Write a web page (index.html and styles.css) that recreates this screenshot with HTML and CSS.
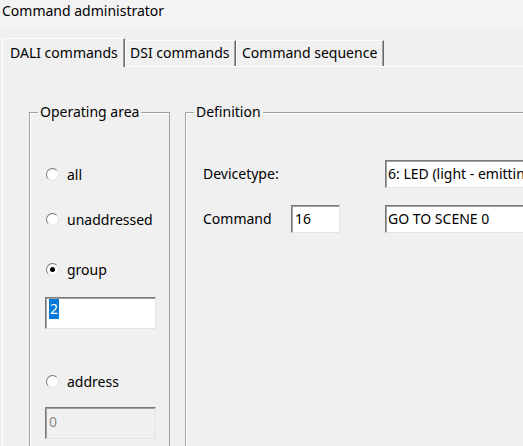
FILE: index.html
```html
<!DOCTYPE html>
<html>
<head>
<meta charset="utf-8">
<link rel="stylesheet" href="styles.css">
</head>
<body>
<div class="title">Command administrator</div>
<div class="tabs">
  <div class="tab tab-active">DALI commands</div>
  <div class="tab tab-dsi">DSI commands</div>
  <div class="tab tab-seq">Command sequence</div>
</div>
<div class="panel">
  <fieldset class="group op">
    <legend>Operating area</legend>
    <div class="op-body">
      <div class="radio r-all"><span class="circle"></span>all</div>
      <div class="radio r-unaddr"><span class="circle"></span>unaddressed</div>
      <div class="radio r-group"><span class="circle checked"></span>group</div>
      <div class="box box-group"><span class="sel">2</span></div>
      <div class="radio r-addr"><span class="circle"></span>address</div>
      <div class="box box-addr disabled">0</div>
    </div>
  </fieldset>
  <fieldset class="group def">
    <legend>Definition</legend>
    <div class="def-body">
      <div class="lbl lbl-dev">Devicetype:</div>
      <div class="box box-dev">6: LED (light - emitting diode)</div>
      <div class="lbl lbl-cmd">Command</div>
      <div class="box box-num">16</div>
      <div class="box box-name">GO TO SCENE 0</div>
    </div>
  </fieldset>
</div>
</body>
</html>
```
FILE: styles.css
```css
html, body {
  margin: 0;
  height: 100%;
  overflow: hidden;
  background: #f0f0f0;
  font-family: "Noto Sans", sans-serif;
  font-size: 14px;
  color: #000;
}

.title {
  height: 28px;
  background: #f3f3f3;
  padding-left: 2px;
  line-height: 21px;
}

.tabs {
  display: flex;
  align-items: flex-end;
  height: 28px;
  padding-top: 10px;
  padding-left: 2px;
}

.tab {
  box-sizing: border-box;
  height: 26px;
  line-height: 24px;
  border-top: 1px solid #fff;
  border-left: 1px solid #fff;
  border-right: 1px solid #696969;
  box-shadow: inset -1px 0 0 #a0a0a0;
  white-space: nowrap;
}

.tab-active {
  position: relative;
  z-index: 1;
  width: 123px;
  height: 29px;
  margin-bottom: -1px;
  line-height: 27px;
  padding-left: 7px;
  background: #f0f0f0;
}

.tab-dsi {
  width: 111px;
  padding-left: 4px;
}

.tab-seq {
  width: 148px;
  padding-left: 5px;
}

.panel {
  display: flex;
  align-items: flex-start;
  margin-left: 2px;
  border-top: 1px solid #fff;
  border-left: 1px solid #fff;
  height: 400px;
  padding-left: 26px;
}

.group {
  margin: 35px 0 0 0;
  padding: 0;
  border: 1px solid #a0a0a0;
  box-shadow: inset 1px 1px 0 #fff;
  box-sizing: border-box;
  height: 420px;
  min-width: 0;
}

.group legend {
  margin-left: 8px;
  padding: 0 2px;
  line-height: 20px;
}

.op {
  width: 141px;
  flex: none;
}

.def {
  width: 460px;
  flex: none;
  margin-left: 15px;
}

.op-body {
  display: flex;
  flex-direction: column;
  padding-top: 42px;
  padding-left: 15px;
}

.radio {
  display: flex;
  align-items: center;
  height: 20px;
  padding-left: 1px;
  white-space: nowrap;
}

.circle {
  box-sizing: border-box;
  width: 13px;
  height: 13px;
  border-radius: 50%;
  border: 1px solid;
  border-color: #7a7a7a #e3e3e3 #e3e3e3 #7a7a7a;
  background: #fff;
  margin-right: 8px;
  display: flex;
  align-items: center;
  justify-content: center;
}

.circle.checked::after {
  content: "";
  width: 5px;
  height: 5px;
  border-radius: 50%;
  background: #000;
}

.r-unaddr { margin-top: 25px; }
.r-group { margin-top: 30px; }
.r-addr { margin-top: 42px; }

.box {
  box-sizing: border-box;
  border: 1px solid;
  border-color: #7a7a7a #e3e3e3 #e3e3e3 #7a7a7a;
  box-shadow: inset 1px 1px 0 #a0a0a0;
  background: #fff;
  white-space: nowrap;
  overflow: hidden;
}

.box-group {
  width: 111px;
  height: 32px;
  margin-top: 18px;
  padding: 1px 0 0 3px;
  line-height: 20px;
}

.sel {
  display: inline-block;
  background: #0078d7;
  color: #fff;
  padding: 0 1px;
}

.box-addr {
  width: 111px;
  height: 32px;
  margin-top: 16px;
  padding-left: 3px;
  line-height: 28px;
}

.box.disabled {
  background: #f0f0f0;
  color: #8a8a8a;
}

.def-body {
  display: grid;
  grid-template-columns: 88px 49px 45px 200px;
  grid-template-rows: 28px 28px;
  row-gap: 17px;
  padding-top: 38px;
  padding-left: 17px;
}

.lbl {
  line-height: 28px;
  white-space: nowrap;
}

.lbl-dev { grid-column: 1 / 3; grid-row: 1; }
.lbl-cmd { grid-column: 1; grid-row: 2; }

.box-dev {
  grid-column: 4;
  grid-row: 1;
  padding-left: 2px;
  line-height: 26px;
}

.box-num {
  grid-column: 2;
  grid-row: 2;
  padding-left: 3px;
  line-height: 26px;
}

.box-name {
  grid-column: 4;
  grid-row: 2;
  padding-left: 2px;
  line-height: 26px;
}
```
